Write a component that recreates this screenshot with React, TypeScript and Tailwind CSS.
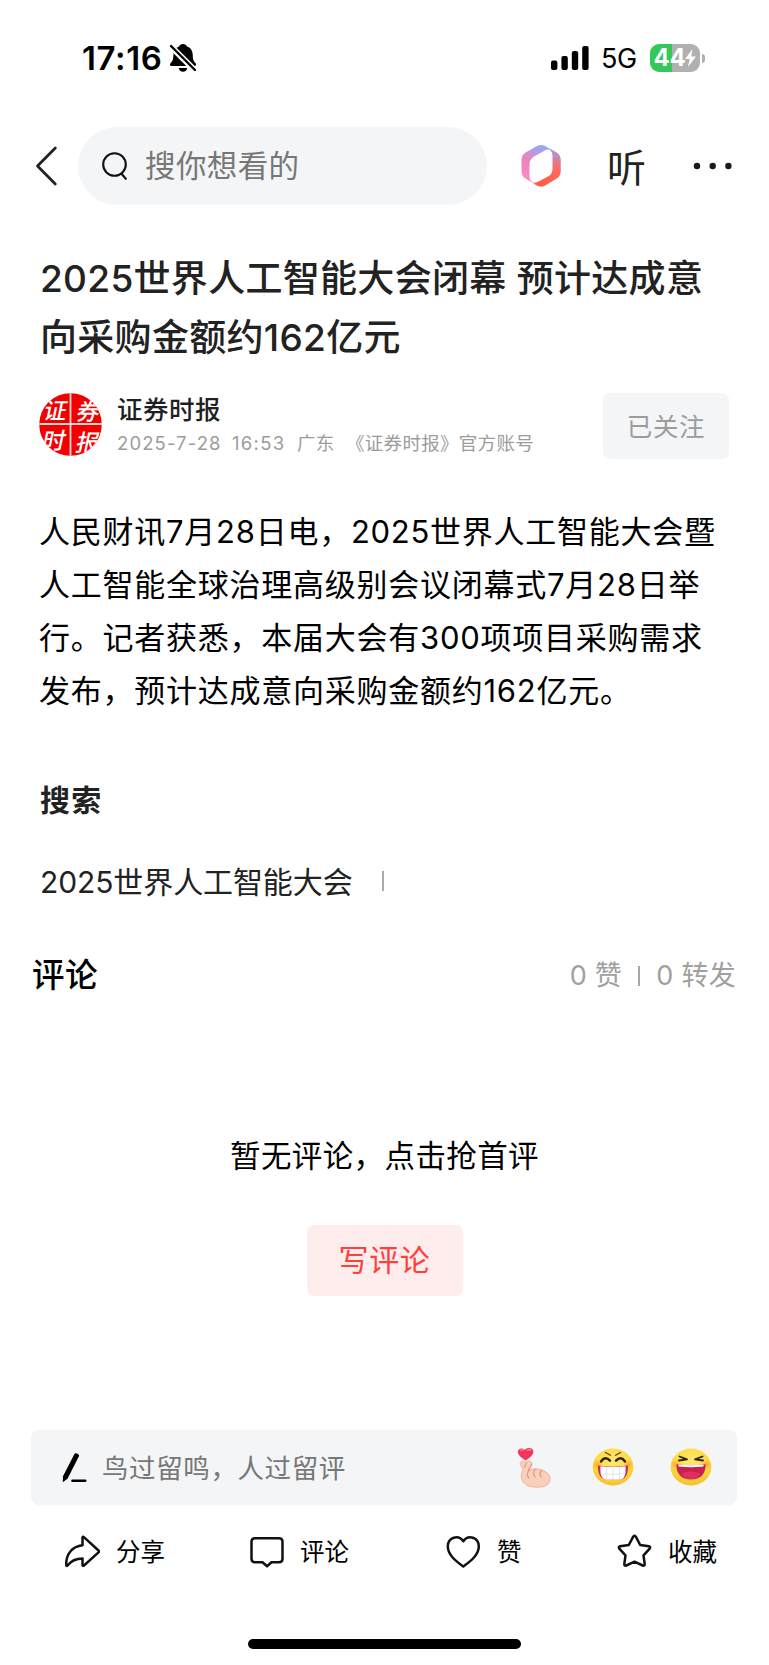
import type { ReactNode } from 'react';

const titleLines = ['2025世界人工智能大会闭幕 预计达成意', '向采购金额约162亿元'];

const bodyLines = [
  '人民财讯7月28日电，2025世界人工智能大会暨',
  '人工智能全球治理高级别会议闭幕式7月28日举',
  '行。记者获悉，本届大会有300项项目采购需求',
  '发布，预计达成意向采购金额约162亿元。',
];

function StatusBar() {
  return (
    <div className="flex items-center h-[116px] pl-[82px] pr-[64px]">
      <span className="text-[33px] leading-none font-semibold tracking-[0.600px] w-[87px] whitespace-nowrap">17:16</span>
      <svg width="28" height="30" viewBox="0 0 28 30">
        <path d="M14 1c2 0 3.500 1 4 2.600 3.800 1.300 5.500 4.300 5.700 7.900.2 5 .7 6.500 3 8.800.9 1.200.3 2.700-1.200 2.700H2.500c-1.500 0-2-1.500-1.100-2.700 2.300-2.300 2.800-3.800 3-8.800.2-3.600 1.900-6.600 5.600-7.900C10.500 2 12 1 14 1z" />
        <path d="M9.700 25h8.600c-.3 2.200-2 3.700-4.300 3.700S10 27.200 9.700 25z" />
        <path d="M0 1.500L27 28.500" stroke="#fff" strokeWidth="6" />
        <path d="M2 3L26 27" stroke="#000" strokeWidth="2.400" strokeLinecap="round" />
      </svg>
      <div className="flex-1" />
      <svg width="38" height="24" viewBox="0 0 38 24">
        <rect x="0" y="14.500" width="6.400" height="9.500" rx="2" />
        <rect x="10.400" y="10" width="6.400" height="14" rx="2" />
        <rect x="20.800" y="5" width="6.400" height="19" rx="2" />
        <rect x="31.200" y="0" width="6.400" height="24" rx="2" />
      </svg>
      <span className="ml-[12px] w-[36px] text-[27px] leading-none whitespace-nowrap tracking-[-0.3px]">5G</span>
      <div className="ml-[13px] flex items-center justify-center w-[50px] h-[28px] rounded-[9px] text-white bg-[linear-gradient(90deg,#34c759_44%,#b0b0b0_44%)]">
        <span className="text-[24px] leading-none font-bold tracking-[-0.3px]">44</span>
        <svg width="11" height="18" viewBox="0 0 11 18" fill="#fff">
          <path d="M7.500 0L0 10h4.700L3 18l8-10.500H6.200z" />
        </svg>
      </div>
      <div className="ml-[2px] w-[3px] h-[9px] rounded-r-full bg-[#b0b0b0]" />
    </div>
  );
}

function NavBar() {
  return (
    <div className="flex items-center h-[78px] mt-[11px] pl-[35px]">
      <svg width="24" height="42" viewBox="0 0 24 42" fill="none" stroke="#222" strokeWidth="2.800" strokeLinecap="round" strokeLinejoin="round">
        <path d="M20.300 3L2.500 21l17.800 18" />
      </svg>
      <div className="ml-[19px] flex items-center w-[409px] h-[78px] rounded-full bg-[#f3f5f7] pl-[24px]">
        <svg width="26" height="28" viewBox="0 0 26 28" fill="none" stroke="#111" strokeWidth="2.100" strokeLinecap="round">
          <circle cx="12.500" cy="12.500" r="11.300" />
          <path d="M19.500 21.800l4.300 5" />
        </svg>
        <span className="ml-[17px] mt-[1px] text-[30.500px] leading-none tracking-[0.400px] text-[#777]">搜你想看的</span>
      </div>
      <svg className="ml-[34px]" width="40" height="44" viewBox="0 0 40 44">
        <defs>
          <linearGradient id="hexLeft" x1="0.600" y1="0" x2="0.300" y2="1">
            <stop offset="0" stopColor="#86b0ff" />
            <stop offset="0.450" stopColor="#ee82b8" />
            <stop offset="1" stopColor="#ff8fc9" />
          </linearGradient>
          <linearGradient id="hexRight" x1="0.600" y1="0" x2="0.400" y2="1">
            <stop offset="0" stopColor="#a99ae0" />
            <stop offset="0.450" stopColor="#fb6a60" />
            <stop offset="1" stopColor="#ff5c45" />
          </linearGradient>
        </defs>
        <path d="M15.500 2.200q4.500-2.400 9 0l11 6.300q4 2.500 4 7v12q0 4.500-4 7l-11 6.700q-4.500 2.600-9 0l-11-6.700q-4-2.500-4-7v-12q0-4.500 4-7z" fill="url(#hexLeft)" />
        <path d="M29 4.800l6.500 3.700q4 2.500 4 7v12q0 4.500-4 7l-11 6.700q-4.500 2.600-9 0l-2.500-1.600L30 30V10z" fill="url(#hexRight)" />
        <path d="M13 12.500l11.500-6.300q6-2.400 7 5v13.800q0 4.500-3.700 7L16.500 38q-7 2.500-8-5.500V20q0-4.500 4.500-7.500z" fill="#fff" />
      </svg>
      <span className="ml-[46px] mt-[2px] w-[40px] text-[39px] leading-none text-[#222]">听</span>
      <svg className="ml-[46px]" width="40" height="8" viewBox="0 0 40 8" fill="#1a1a1a">
        <circle cx="4" cy="4" r="3.200" />
        <circle cx="19.700" cy="4" r="3.200" />
        <circle cx="35.400" cy="4" r="3.200" />
      </svg>
    </div>
  );
}

function Avatar() {
  return (
    <svg width="63" height="63" viewBox="0 0 63 63" className="shrink-0">
      <defs>
        <clipPath id="avatarClip">
          <circle cx="31.500" cy="31.500" r="31.300" />
        </clipPath>
      </defs>
      <g clipPath="url(#avatarClip)">
        <rect width="63" height="63" fill="#f20000" />
        <path d="M31.500 0v63M0 31h63" stroke="#ffd5d5" strokeWidth="1.800" />
        <g fill="#fff" fontSize="23" fontWeight="500" transform="skewX(-12)">
          <text x="9" y="26">证</text>
          <text x="42" y="27">券</text>
          <text x="14" y="56">时</text>
          <text x="48" y="58">报</text>
        </g>
      </g>
    </svg>
  );
}

function AuthorRow() {
  return (
    <div className="flex h-[66px] mt-[26px] pl-[39px] pr-[40px]">
      <Avatar />
      <div className="ml-[15px] flex-1 flex flex-col whitespace-nowrap">
        <div className="h-[33px] leading-[33px] text-[25.500px] font-medium tracking-[0.500px] text-[#1f1f1f]">证券时报</div>
        <div className="flex h-[33px] leading-[34px] text-[18.500px] tracking-[0.300px] text-[#9c9c9c]">
          <span className="w-[115px] tracking-[1.100px]">2025-7-28</span>
          <span className="w-[65px] tracking-[1.300px]">16:53</span>
          <span className="w-[49px]">广东</span>
          <span>《证券时报》官方账号</span>
        </div>
      </div>
      <button className="w-[126px] h-[66px] pt-[3px] rounded-[7px] bg-[#f3f5f7] text-[25.500px] tracking-[0.600px] text-[#9c9c9c]">已关注</button>
    </div>
  );
}

function Action({ icon, label, className }: { icon: ReactNode; label: string; className: string }) {
  return (
    <div className={`flex items-center ${className}`}>
      <svg width="36" height="36" viewBox="0 0 36 36" fill="none" stroke="#111" strokeWidth="2.500" strokeLinejoin="round" strokeLinecap="round">
        {icon}
      </svg>
      <span className="mt-[1px] text-[24.500px] leading-none whitespace-nowrap">{label}</span>
    </div>
  );
}

function FingerHeart() {
  return (
    <svg width="34" height="41" viewBox="0 0 34 41">
      <path d="M8.500 13.500C4 10.500.8 8 .8 4.800.8 1.500 5.200 0 7.800 3 10 .2 15.800.3 16.300 4.200c.4 3.600-3.300 6.500-7.800 9.300z" fill="#f4365f" />
      <path d="M3 4q1.500-2 3.500-.8M10 3.400q2-1.400 4 0" stroke="#ff91a8" strokeWidth="1.200" fill="none" />
      <path d="M3 17c.5-3.500 4-3.500 6-1.500 2-2.500 6.500-1.500 6 1.500l-3.500 6.500c5-2 9-2.300 13-.3 6 1.500 8.500 5 8.500 9 0 4.500-4 8-12 8-10 0-15-3-16.500-9-.8-4 .8-7 1.500-9z" fill="#fbd0bb" stroke="#edac97" strokeWidth="0.900" />
      <path d="M12 23c-2 3-2 6 0 8M18.500 22c-2.500 3-2.500 5.500-.5 8M25 23c-2.500 2.500-2.500 5-.5 7M9.500 16L7.500 20M15 17l-4 7" stroke="#df947d" strokeWidth="1.100" fill="none" strokeLinecap="round" />
    </svg>
  );
}

function Face({ children }: { children: ReactNode }) {
  return (
    <svg width="42" height="38" viewBox="0 0 42 38">
      <defs>
        <radialGradient id="faceFill" cx="0.500" cy="0.350" r="0.650">
          <stop offset="0" stopColor="#ffe873" />
          <stop offset="0.700" stopColor="#ffd93b" />
          <stop offset="1" stopColor="#f7bd28" />
        </radialGradient>
        <radialGradient id="cheek">
          <stop offset="0" stopColor="#ff8a3c" stopOpacity="0.700" />
          <stop offset="1" stopColor="#ff8a3c" stopOpacity="0" />
        </radialGradient>
      </defs>
      <ellipse cx="21" cy="19" rx="20.300" ry="18.400" fill="url(#faceFill)" />
      <circle cx="5.500" cy="16.500" r="5" fill="url(#cheek)" />
      <circle cx="36.500" cy="16.500" r="5" fill="url(#cheek)" />
      {children}
    </svg>
  );
}

function CommentInput() {
  return (
    <div className="flex items-center h-[75px] mt-[134px] ml-[31px] mr-[32px] pl-[31px] rounded-[8px] bg-[#f3f5f7]">
      <svg width="26" height="30" viewBox="0 0 26 30">
        <path d="M12.300 1.200q1-1.600 2.700-.7l1.200.7q1.300.9.600 2.300L5.500 25.800.8 29.300 1 23.200z" />
        <path d="M10.500 27.800h12.700" stroke="#000" strokeWidth="2.600" strokeLinecap="round" />
      </svg>
      <span className="ml-[14px] mt-[1px] text-[26.500px] leading-none tracking-[0.600px] whitespace-nowrap text-[#777]">鸟过留鸣，人过留评</span>
      <div className="flex-1" />
      <FingerHeart />
      <div className="ml-[41px] mb-[2px]">
        <Face>
          <path d="M13.500 4.500l5 2.800M28.500 4.500l-5 2.800" stroke="#5b3f12" strokeWidth="1.300" strokeLinecap="round" />
          <path d="M9 13.500q4-6 9-.8M24 12.700q5-5.200 9 .8" stroke="#2c2410" strokeWidth="2.400" fill="none" strokeLinecap="round" />
          <path d="M6 17.500q15 2.300 30 0 .5 14.500-10 14.500H16Q5.500 32 6 17.500z" fill="#cf2457" />
          <path d="M8.500 18.300q12.500 1.200 25 0 1 13.400-6 13.400h-13q-7 0-6-13.400z" fill="#fff" />
          <path d="M8.500 25.500q12.500 2 25 0M14.500 19v12M21 19v12M27.500 19v12" stroke="#dcdfe4" strokeWidth="0.800" fill="none" />
        </Face>
      </div>
      <div className="ml-[36px] mr-[25px] mb-[2px]">
        <Face>
          <path d="M9.500 8.500l7.500 2.800-8 1.200M32.500 8.500l-7.500 2.800 8 1.200" stroke="#2c2410" strokeWidth="1.800" fill="none" strokeLinecap="round" strokeLinejoin="round" />
          <path d="M6.500 16.300q14.500 1.700 29 0C36 26 30.500 31.500 21 31.500S6 26 6.500 16.300z" fill="#c9204f" />
          <path d="M11.500 26q9.500-5.500 19 0-3.500 5-9.500 5t-9.500-5z" fill="#e0305f" />
          <path d="M8.500 16.500q12.500 1.300 25 0v2q-12.500 1.500-25 0z" fill="#fff" />
        </Face>
      </div>
    </div>
  );
}

export default function App() {
  return (
    <div lang="zh-CN" className="w-[769px] h-[1665px] overflow-hidden bg-white text-black font-[Inter,'Noto_Sans_CJK_SC',sans-serif]">
      <StatusBar />
      <NavBar />

      <h1 className="mt-[44px] pl-[40px] text-[37px] leading-[59px] font-medium tracking-[0.300px] text-[#222] whitespace-nowrap">
        {titleLines.map((line) => (
          <div key={line}>{line}</div>
        ))}
      </h1>
      <AuthorRow />

      <div className="mt-[46px] pl-[39px] text-[31px] leading-[53px] tracking-[0.750px] whitespace-nowrap">
        {bodyLines.map((line) => (
          <div key={line}>{line}</div>
        ))}
      </div>

      {/* Related search */}
      <h2 className="mt-[63px] pl-[40px] text-[30px] leading-[40px] font-bold tracking-[1.200px] text-[#222]">搜索</h2>
      <div className="mt-[42px] mb-[54px] pl-[40px] flex items-center h-[40px] text-[30px] tracking-[-0.100px] text-[#222]">
        <span className="w-[342px] whitespace-nowrap">2025世界人工智能大会</span>
        <span className="w-[2px] h-[20px] mb-[2px] bg-[#aaa]" />
      </div>

      {/* Comments */}
      <div className="pl-[32px] pr-[33px] flex items-center justify-between h-[40px]">
        <h2 className="text-[32.500px] font-medium tracking-[0.400px]">评论</h2>
        <div className="flex items-center text-[27px] tracking-[0.300px] text-[#a0a0a0]">
          <span>0 赞</span>
          <span className="w-[2px] h-[20px] mx-[16px] bg-[#a8a8a8]" />
          <span>0 转发</span>
        </div>
      </div>
      <div className="mt-[140px] text-center text-[30.500px] leading-[40px] tracking-[0.400px]">暂无评论，点击抢首评</div>
      <div className="mt-[49px] flex justify-center">
        <button className="w-[156px] h-[71px] rounded-[7px] bg-[#ffeded] text-[30px] tracking-[0.600px] text-[#ff3f3a]">写评论</button>
      </div>

      <CommentInput />

      <div className="flex mt-[27px] mb-[67px] h-[40px] pl-[64px]">
        <Action
          className="gap-[16px] w-[185px]"
          label="分享"
          icon={<path d="M18.500 3.500c.2-.8.800-.9 1.400-.4L34.500 16.500c.6.600.6 1.200 0 1.800L20 31.500c-.8.600-1.500.3-1.500-.5v-6.500C11 24.500 7 27 3.500 31.500c-.6.700-1.300.4-1.300-.5C2 20 8 12.500 18.500 11.300z" />}
        />
        <Action
          className="gap-[15px] w-[196px]"
          label="评论"
          icon={<path d="M6 4.200h24q3.500 0 3.500 3.500v17q0 3.500-3.500 3.500h-7.500L18 32.200l-4.500-4H6q-3.500 0-3.500-3.500v-17q0-3.500 3.500-3.500z" />}
        />
        <Action
          className="gap-[16px] w-[171px]"
          label="赞"
          icon={<path d="M18.300 32.500C10 26.500 2.800 20.500 2.800 12.500c0-9 10.500-12.500 15.500-5.300 5-7.200 15.500-3.700 15.500 5.300 0 8-7.200 14-15.500 20z" />}
        />
        <Action
          className="gap-[16px]"
          label="收藏"
          icon={<path d="M17.200 2.700q1.300-1.700 2.600 0l4.400 8.300 8.700 1.300q2 .6.800 2.300l-6.200 6.700 1.200 8.800q-.1 2-2 1.400l-8.200-3.800-8.200 3.800q-1.900.6-2-1.400l1.200-8.800-6.200-6.700q-1.200-1.700.8-2.300l8.700-1.300z" />}
        />
      </div>
      <div className="mx-auto w-[273px] h-[10px] rounded-full bg-black" />
    </div>
  );
}
